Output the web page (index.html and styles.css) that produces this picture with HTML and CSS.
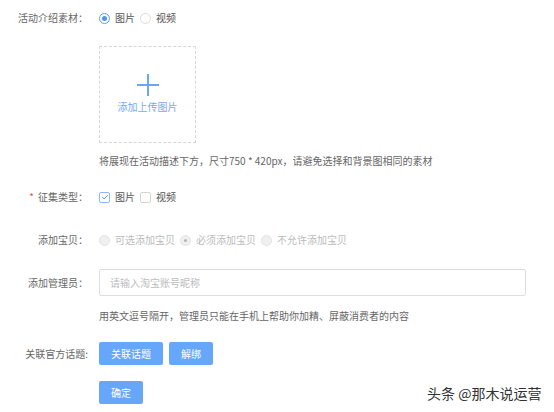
FILE: index.html
```html
<!DOCTYPE html>
<html lang="zh">
<head>
<meta charset="utf-8">
<link rel="stylesheet" href="styles.css">
</head>
<body>
<div class="form">
  <div class="row r1">
    <div class="label">活动介绍素材：</div>
    <div class="ctl">
      <span class="opt"><span class="radio on"></span>图片</span>
      <span class="opt"><span class="radio"></span>视频</span>
    </div>
  </div>
  <div class="row r2">
    <div class="label"></div>
    <div class="ctl">
      <div class="upload">
        <svg class="plus" width="24" height="24" viewBox="0 0 24 24"><path d="M12 1v22M1 12h22" stroke="#6aa6f7" stroke-width="2" fill="none"/></svg>
        <div class="uptext">添加上传图片</div>
      </div>
    </div>
  </div>
  <div class="row r3">
    <div class="label"></div>
    <div class="ctl hint">将展现在活动描述下方，尺寸750 * 420px，请避免选择和背景图相同的素材</div>
  </div>
  <div class="row r4">
    <div class="label"><span class="req">*</span>征集类型：</div>
    <div class="ctl">
      <span class="opt"><span class="check on"><svg width="8" height="8" viewBox="0 0 8 8"><path d="M1.2 4.2l1.9 1.8 3.7-3.8" stroke="#5d9cf5" stroke-width="1" fill="none"/></svg></span>图片</span>
      <span class="opt"><span class="check"></span>视频</span>
    </div>
  </div>
  <div class="row r5">
    <div class="label">添加宝贝：</div>
    <div class="ctl dis">
      <span class="opt"><span class="radio dradio"></span>可选添加宝贝</span>
      <span class="opt"><span class="radio dradio don"></span>必须添加宝贝</span>
      <span class="opt"><span class="radio dradio"></span>不允许添加宝贝</span>
    </div>
  </div>
  <div class="row r6">
    <div class="label">添加管理员：</div>
    <div class="ctl"><div class="input">请输入淘宝账号昵称</div></div>
  </div>
  <div class="row r7">
    <div class="label"></div>
    <div class="ctl hint">用英文逗号隔开，管理员只能在手机上帮助你加精、屏蔽消费者的内容</div>
  </div>
  <div class="row r8">
    <div class="label">关联官方话题:</div>
    <div class="ctl">
      <span class="btn b1">关联话题</span>
      <span class="btn b2">解绑</span>
    </div>
  </div>
  <div class="row r9">
    <div class="label"></div>
    <div class="ctl"><span class="btn b3">确定</span></div>
  </div>
</div>
<div class="wm">头条 @那木说运营</div>
</body>
</html>
```
FILE: styles.css
```css
html, body {
  margin: 0;
  padding: 0;
  background: #fff;
  width: 554px;
  height: 412px;
  overflow: hidden;
  font-family: "Noto Sans CJK SC", "Liberation Sans", sans-serif;
  font-size: 10px;
  color: #666;
}
.form {
  display: flex;
  flex-direction: column;
  padding-top: 8px;
}
.row {
  display: flex;
  align-items: center;
}
.label {
  width: 88px;
  flex: none;
  text-align: right;
  color: #666;
  line-height: 20px;
  white-space: nowrap;
}
.req {
  color: #f04b4b;
  margin-right: 4px;
}
.ctl {
  margin-left: 11px;
  display: flex;
  align-items: center;
  line-height: 20px;
}
.r1 { height: 20px; }
.r2 { margin-top: 18px; }
.r3 { margin-top: 11px; height: 14px; }
.r4 { margin-top: 19px; height: 20px; }
.r5 { margin-top: 23px; height: 20px; }
.r6 { margin-top: 19px; }
.r7 { margin-top: 13px; height: 14px; }
.r8 { margin-top: 19px; }
.r9 { margin-top: 16px; }
.opt {
  display: inline-flex;
  align-items: center;
  margin-right: 5px;
  color: #555;
}
.radio {
  width: 9px;
  height: 9px;
  border: 1px solid #dcdcdc;
  border-radius: 50%;
  margin-right: 5px;
  box-sizing: content-box;
  position: relative;
  background: #fff;
}
.radio.on {
  border-color: #5a9bf6;
}
.radio.on::after {
  content: "";
  position: absolute;
  left: 2px;
  top: 2px;
  width: 5px;
  height: 5px;
  border-radius: 50%;
  background: #4f93f4;
}
.dis .opt { color: #bbb; margin-right: 5px; }
.dradio {
  background: #f0f0f0;
  border-color: #e3e3e3;
}
.dradio.don::after {
  content: "";
  position: absolute;
  left: 3px;
  top: 3px;
  width: 3px;
  height: 3px;
  border-radius: 50%;
  background: #b5b5b5;
}
.check {
  width: 9px;
  height: 9px;
  border: 1px solid #d4d4d4;
  border-radius: 2px;
  margin-right: 5px;
  display: inline-flex;
  align-items: center;
  justify-content: center;
  background: #fff;
}
.check.on { border-color: #8bb8f7; }
.upload {
  width: 95px;
  height: 95px;
  border: 1px dashed #d6d6d6;
  display: flex;
  flex-direction: column;
  align-items: center;
}
.plus { margin-top: 26px; }
.uptext {
  margin-top: 3px;
  color: #74a9f5;
  line-height: 14px;
}
.hint {
  color: #666;
  line-height: 14px;
}
.input {
  width: 415px;
  height: 25px;
  border: 1px solid #dedede;
  border-radius: 2px;
  padding-left: 10px;
  color: #bdbdbd;
  line-height: 25px;
}
.btn {
  display: inline-block;
  height: 23px;
  line-height: 23px;
  background: #67a7fb;
  color: #fff;
  border-radius: 2px;
  text-align: center;
}
.b1 { width: 64px; }
.b2 { width: 44px; margin-left: 6px; }
.b3 { width: 44px; }
.wm {
  position: absolute;
  left: 427px;
  top: 383px;
  font-size: 14px;
  line-height: 20px;
  color: #333;
  text-shadow: 0 0 2px #fff;
}
```
